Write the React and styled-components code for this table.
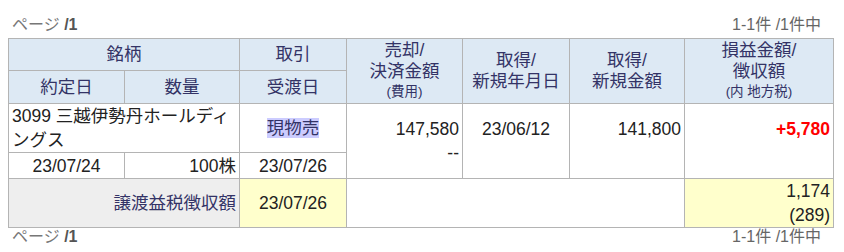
import React from 'react'
import styled, { createGlobalStyle } from 'styled-components'

const GlobalStyle = createGlobalStyle`
  body {
    margin: 8px;
    background: #ffffff;
    font-family: "Liberation Sans", "Noto Sans CJK JP", sans-serif;
    color: #222222;
  }
`;

const Pager = styled.div`
  display: flex;
  justify-content: space-between;
  align-items: center;
  width: 825px;
  height: ${props => props.bottom ? '18px' : '26px'};
  padding-top: ${props => props.bottom ? '0' : '4px'};
  font-size: 16px;
  line-height: 18px;
  color: #777777;
`;

const PageLabel = styled.span`
  padding-left: 4px;
`;

const PageNum = styled.b`
  color: #555555;
`;

const Count = styled.span`
  padding-right: 12px;
  color: #666666;
`;

const Table = styled.table`
  width: 825px;
  table-layout: fixed;
  border-collapse: collapse;
  font-size: 17.5px;
`;

const Row = styled.tr`
  height: ${props => props.h}px;
`;

const Head = styled.th`
  border: 1px solid #b4b4b4;
  background: #dde9f4;
  color: #333366;
  font-weight: normal;
  text-align: ${props => props.align || 'center'};
  vertical-align: middle;
  padding: 0 3px;
  line-height: 21px;
  background: ${props => props.gray ? '#eeeeee' : '#dde9f4'};
`;

const Small = styled.div`
  font-size: 13.5px;
  line-height: 20px;
`;

const Cell = styled.td`
  border: 1px solid #b4b4b4;
  text-align: ${props => props.align || 'left'};
  vertical-align: middle;
  padding: 0 3px;
  line-height: 24px;
  background: ${props => props.yellow ? '#ffffcc' : '#ffffff'};
  color: ${props => props.red ? '#ff0000' : '#222222'};
  font-weight: ${props => props.red ? 'bold' : 'normal'};
`;

const Trade = styled.span`
  background: #ccccff;
  color: #333366;
`;

function Pagination({ bottom }) {
  return (
    <Pager bottom={bottom}>
      <PageLabel>ページ <PageNum>/1</PageNum></PageLabel>
      <Count>1-1件 /1件中</Count>
    </Pager>
  );
}

export default function App() {
  return (
    <>
      <GlobalStyle />
      <Pagination />
      <Table>
        <colgroup>
          <col style={{ width: 116 }} />
          <col style={{ width: 115 }} />
          <col style={{ width: 107 }} />
          <col style={{ width: 116 }} />
          <col style={{ width: 107 }} />
          <col style={{ width: 115 }} />
          <col style={{ width: 149 }} />
        </colgroup>
        <tbody>
          <Row h={32}>
            <Head colSpan={2}>銘柄</Head>
            <Head>取引</Head>
            <Head rowSpan={2}>売却/<br />決済金額<Small>(費用)</Small></Head>
            <Head rowSpan={2}>取得/<br />新規年月日</Head>
            <Head rowSpan={2}>取得/<br />新規金額</Head>
            <Head rowSpan={2}>損益金額/<br />徴収額<Small>(内 地方税)</Small></Head>
          </Row>
          <Row h={33}>
            <Head>約定日</Head>
            <Head>数量</Head>
            <Head>受渡日</Head>
          </Row>
          <Row h={47}>
            <Cell colSpan={2}>3099 三越伊勢丹ホールディングス</Cell>
            <Cell align="center"><Trade>現物売</Trade></Cell>
            <Cell rowSpan={2} align="right">147,580<br />--</Cell>
            <Cell rowSpan={2} align="center">23/06/12<br />&nbsp;</Cell>
            <Cell rowSpan={2} align="right">141,800<br />&nbsp;</Cell>
            <Cell rowSpan={2} align="right" red>+5,780<br />&nbsp;</Cell>
          </Row>
          <Row h={26}>
            <Cell align="center">23/07/24</Cell>
            <Cell align="right">100株</Cell>
            <Cell align="center">23/07/26</Cell>
          </Row>
          <Row h={47}>
            <Head colSpan={2} align="right" gray>譲渡益税徴収額</Head>
            <Cell align="center" yellow>23/07/26</Cell>
            <Cell colSpan={3}></Cell>
            <Cell align="right" yellow>1,174<br />(289)</Cell>
          </Row>
        </tbody>
      </Table>
      <Pagination bottom />
    </>
  );
}
